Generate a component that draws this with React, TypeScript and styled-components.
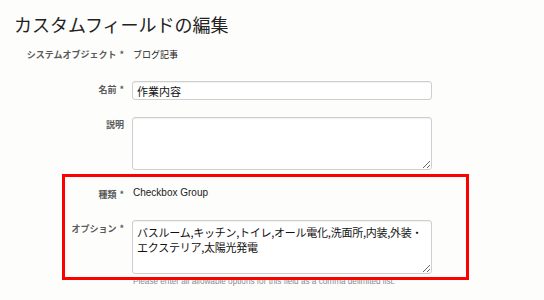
import React from "react";
import styled, { createGlobalStyle } from "styled-components";

const GlobalStyle = createGlobalStyle`
  html, body {
    margin: 0;
    padding: 0;
    background: #fdfdfc;
  }
  body {
    font-family: "Liberation Sans", "Noto Sans CJK JP", sans-serif;
    color: #333;
  }
`;

const Page = styled.div`
  width: 544px;
  height: 300px;
  overflow: hidden;
  padding: 12px 0 0 0;
  box-sizing: border-box;
`;

const Title = styled.h1`
  margin: 0 0 12px 14px;
  font-family: "Noto Sans CJK JP", sans-serif;
  font-weight: 400;
  font-size: 18px;
  line-height: 24px;
  color: #222;
`;

const Form = styled.form`
  position: relative;
  display: flex;
  flex-direction: column;
`;

const Row = styled.div<{ $gap: number }>`
  display: grid;
  grid-template-columns: 124px 300px;
  column-gap: 8px;
  margin-bottom: ${(p) => p.$gap}px;
`;

const Label = styled.label<{ $pad?: number }>`
  text-align: right;
  font-family: "Noto Sans CJK JP", sans-serif;
  font-weight: 700;
  font-size: 9px;
  line-height: 14px;
  color: #5a5a5a;
  padding-top: ${(p) => p.$pad ?? 0}px;
  white-space: nowrap;
`;

const Star = styled.span`
  margin-left: 3px;
`;

const StaticValue = styled.div<{ $cjk?: boolean }>`
  font-family: ${(p) =>
    p.$cjk ? `"Noto Sans CJK JP", sans-serif` : `"Liberation Sans", "Noto Sans CJK JP", sans-serif`};
  font-size: ${(p) => (p.$cjk ? 9 : 10)}px;
  line-height: 14px;
  color: #222;
  padding-left: 1px;
`;

const TextInput = styled.input`
  box-sizing: border-box;
  width: 300px;
  height: 19px;
  margin: 0;
  padding: 0 4px;
  border: 1px solid #cfcfcf;
  border-radius: 3px;
  box-shadow: inset 0 1px 1px rgba(0, 0, 0, 0.06);
  background: #fff;
  font-family: "Noto Sans CJK JP", sans-serif;
  font-size: 11px;
  color: #111;
  outline: none;
`;

const TextArea = styled.textarea<{ $h: number }>`
  box-sizing: border-box;
  display: block;
  width: 300px;
  height: ${(p) => p.$h}px;
  margin: 0;
  padding: 4px 3px 4px 4px;
  border: 1px solid #cfcfcf;
  border-radius: 3px;
  box-shadow: inset 0 1px 1px rgba(0, 0, 0, 0.06);
  background: #fff;
  font-family: "Noto Sans CJK JP", sans-serif;
  font-size: 11px;
  letter-spacing: -0.25px;
  line-height: 15px;
  color: #111;
  outline: none;
`;

const Help = styled.div`
  grid-column: 2;
  margin-top: 3px;
  padding-left: 1px;
  font-family: "Liberation Sans", sans-serif;
  font-size: 8.2px;
  line-height: 10px;
  color: #8c8c8c;
  white-space: nowrap;
`;

const Highlight = styled.div`
  position: absolute;
  left: 62px;
  top: 126px;
  width: 407px;
  height: 106px;
  box-sizing: border-box;
  border: 3px solid #ff0000;
  pointer-events: none;
`;

export default function App() {
  return (
    <Page>
      <GlobalStyle />
      <Title>カスタムフィールドの編集</Title>
      <Form>
        <Row $gap={19}>
          <Label>
            システムオブジェクト<Star>*</Star>
          </Label>
          <StaticValue $cjk>ブログ記事</StaticValue>
        </Row>
        <Row $gap={17}>
          <Label $pad={2}>
            名前<Star>*</Star>
          </Label>
          <TextInput defaultValue="作業内容" />
        </Row>
        <Row $gap={16}>
          <Label $pad={1}>説明</Label>
          <TextArea $h={53} />
        </Row>
        <Row $gap={18}>
          <Label $pad={2}>
            種類<Star>*</Star>
          </Label>
          <StaticValue>Checkbox Group</StaticValue>
        </Row>
        <Row $gap={0}>
          <Label $pad={2}>
            オプション<Star>*</Star>
          </Label>
          <TextArea
            $h={54}
            defaultValue="バスルーム,キッチン,トイレ,オール電化,洗面所,内装,外装・エクステリア,太陽光発電"
          />
          <Help>Please enter all allowable options for this field as a comma delimited list.</Help>
        </Row>
        <Highlight />
      </Form>
    </Page>
  );
}
